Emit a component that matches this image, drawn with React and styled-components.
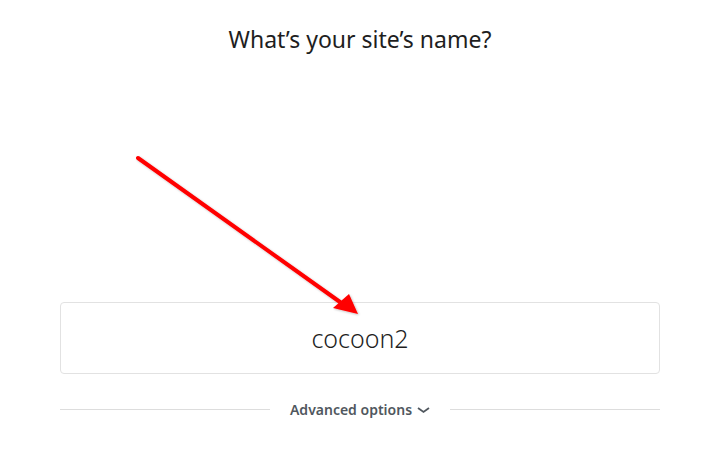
import React from "react";
import styled, { createGlobalStyle } from "styled-components";

const Global = createGlobalStyle`
  html, body {
    margin: 0;
    padding: 0;
    background: #fff;
  }
  body {
    font-family: "Noto Sans", "Open Sans", sans-serif;
    color: #222;
  }
`;

const Page = styled.div`
  position: relative;
  width: 718px;
  height: 467px;
  overflow: hidden;
`;

const Wrap = styled.div`
  width: 600px;
  margin: 0 0 0 60px;
  display: flex;
  flex-direction: column;
  align-items: stretch;
`;

const Title = styled.h1`
  margin: 22px 0 0;
  font-size: 23px;
  font-weight: 400;
  line-height: 34px;
  text-align: center;
  color: #1e1e1e;
`;

const NameBox = styled.div`
  margin-top: 246px;
  height: 70px;
  border: 1px solid #e2e2e2;
  border-radius: 4px;
  display: flex;
  align-items: center;
  justify-content: center;
  font-size: 25px;
  font-weight: 300;
  color: #1e1e1e;
`;

const Divider = styled.div`
  margin-top: 26px;
  display: flex;
  align-items: center;
  gap: 20px;

  &::before,
  &::after {
    content: "";
    flex: 1;
    height: 1px;
    background: #ddd;
  }
`;

const Toggle = styled.button`
  border: 0;
  background: none;
  padding: 0;
  display: flex;
  align-items: center;
  gap: 5px;
  font-family: "Noto Sans", "Open Sans", sans-serif;
  font-size: 14px;
  font-weight: 600;
  color: #50575e;
  cursor: pointer;
`;

const Arrow = styled.svg`
  position: absolute;
  left: 0;
  top: 0;
  pointer-events: none;
`;

export default function App() {
  return (
    <Page>
      <Global />
      <Wrap>
        <Title>What’s your site’s name?</Title>
        <NameBox>cocoon2</NameBox>
        <Divider>
          <Toggle>
            Advanced options
            <svg width="13" height="8" viewBox="0 0 13 8">
              <path d="M1 2l5.5 4 5.5-4" fill="none" stroke="#50575e" strokeWidth="1.8" />
            </svg>
          </Toggle>
        </Divider>
      </Wrap>
      <Arrow width="718" height="467" viewBox="0 0 718 467">
        <defs>
          <filter id="sh" x="-10%" y="-10%" width="120%" height="120%">
            <feDropShadow dx="1" dy="1" stdDeviation="1" floodColor="#000" floodOpacity="0.25" />
          </filter>
        </defs>
        <g filter="url(#sh)">
          <line x1="138" y1="158" x2="340" y2="302" stroke="#f00" strokeWidth="4" strokeLinecap="round" />
          <polygon points="358,314 333,308 349,294" fill="#f00" />
        </g>
      </Arrow>
    </Page>
  );
}
